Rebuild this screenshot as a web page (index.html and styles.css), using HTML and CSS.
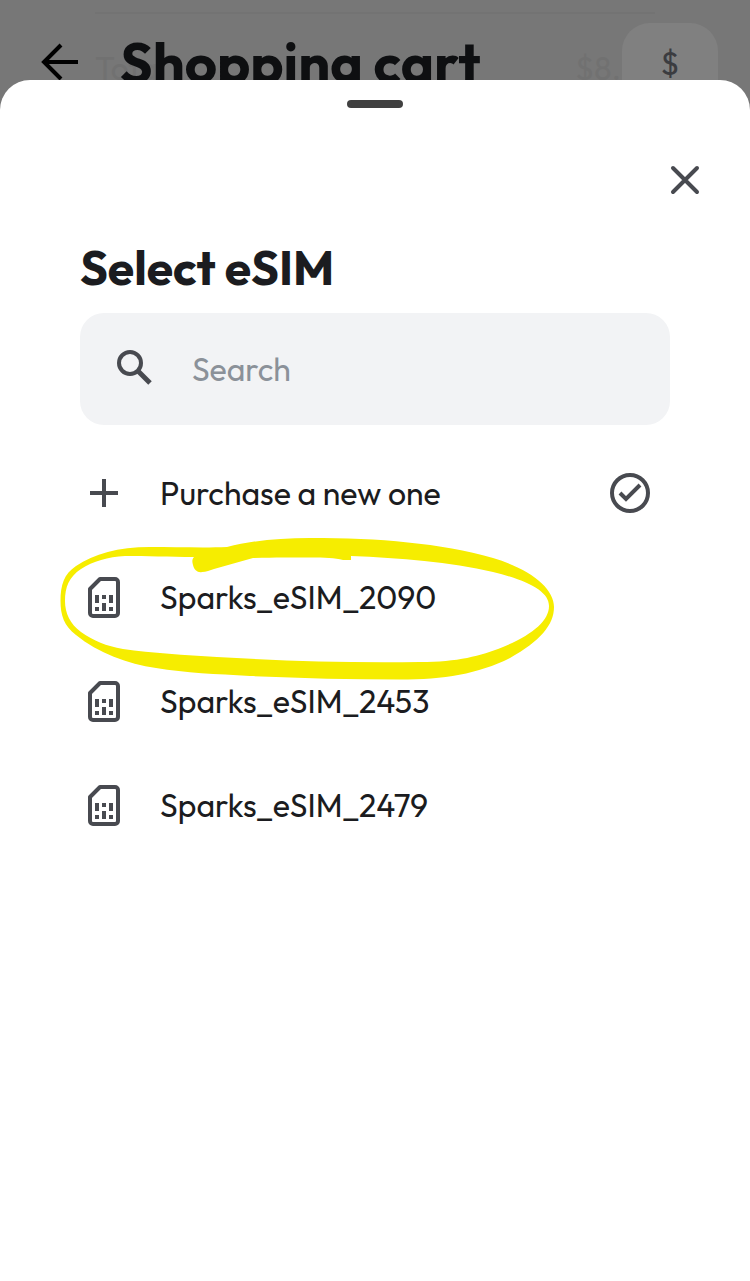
FILE: index.html
```html
<!DOCTYPE html>
<html lang="en">
<head>
<meta charset="utf-8">
<meta name="viewport" content="width=device-width, initial-scale=1">
<title>Select eSIM</title>
<link rel="stylesheet" href="styles.css">
</head>
<body>
<svg class="defs" aria-hidden="true">
  <symbol id="sim" viewBox="0 0 48 48">
    <path d="M20 6H35a3 3 0 0 1 3 3V40a3 3 0 0 1-3 3H13a3 3 0 0 1-3-3V16Z" fill="none" stroke="currentColor" stroke-width="4" stroke-linejoin="round"/>
    <path d="M15 22h4v8h-4zM22 22h4v4h-4zM29 22h4v8h-4zM15 34h4v4h-4zM22 30h4v8h-4zM29 34h4v4h-4z" fill="currentColor"/>
  </symbol>
</svg>
<header class="topbar">
  <div class="total"><span>Total</span><span>$8.</span></div>
  <div class="topbar-row">
    <button class="icon-button back" aria-label="Back">
      <svg class="icon" viewBox="0 0 48 48"><path d="M42 24H8M25 7L8 24L25 41" fill="none" stroke="currentColor" stroke-width="4"/></svg>
    </button>
    <h1 class="page-title">Shopping cart</h1>
    <button class="currency" aria-label="Currency">$</button>
  </div>
</header>
<main class="sheet">
  <div class="handle"></div>
  <div class="close-row">
    <button class="icon-button" aria-label="Close">
      <svg class="icon" viewBox="0 0 48 48"><path d="M12 12L36 36M36 12L12 36" fill="none" stroke="currentColor" stroke-width="4" stroke-linecap="round"/></svg>
    </button>
  </div>
  <section class="content">
    <h2 class="title">Select eSIM</h2>
    <label class="search">
      <svg class="icon" viewBox="0 0 48 48" aria-hidden="true"><circle cx="20" cy="18" r="11" fill="none" stroke="currentColor" stroke-width="4"/><path d="M28 26L40 38" fill="none" stroke="currentColor" stroke-width="5"/></svg>
      <input type="search" placeholder="Search" aria-label="Search">
    </label>
    <ul class="options">
      <li><button class="option">
        <svg class="icon" viewBox="0 0 48 48"><path d="M24 10V38M10 24H38" fill="none" stroke="currentColor" stroke-width="4"/></svg>
        <span class="name">Purchase a new one</span>
        <svg class="check" viewBox="0 0 40 40"><circle cx="20" cy="20" r="18" fill="none" stroke="currentColor" stroke-width="4"/><path d="M10 20L16 26L30 12" fill="none" stroke="currentColor" stroke-width="4"/></svg>
      </button></li>
      <li class="marked"><button class="option">
        <svg class="icon"><use href="#sim"/></svg>
        <span class="name">Sparks_eSIM_2090</span>
      </button>
      <svg class="marker" viewBox="60 530 500 160" aria-hidden="true"><path fill="#f6ed00" fill-rule="evenodd" d="M60.500 601C60.500 585 64 574 76 566C94 554 118 547 150 547C175 547 205 548 227 547C250 541 278 538 310 538C380 538 440 543 493 558C530 569 554 588 554 607C554 625 540 641 510 658C478 674 444 679.500 400 679.500C350 679.500 300 678 250 676C216 674 186 673 156 668C128 664 98 653 76 635C64 626 60.500 615 60.500 601ZM65 601C65 587 69 577 81 569C93 561 108 557 125 556C145 556 170 557 194 557C192 559 192 562 193 565C194 570 198 573 202 572C206 572 210 570 214 569L253 558C275 557.500 292 557.500 310 557.500C325 557.500 335 558 343 560H351V556C400 558 450 562 493 572C530 581 549 592 549 606C549 621 532 635 503 647C480 656 458 662 420 662C350 663 285 661 217 657C185 655 152 653 123 649C106 646 94 641 81 632C70 624 65 613 65 601Z"/></svg></li>
      <li><button class="option">
        <svg class="icon"><use href="#sim"/></svg>
        <span class="name">Sparks_eSIM_2453</span>
      </button></li>
      <li><button class="option">
        <svg class="icon"><use href="#sim"/></svg>
        <span class="name">Sparks_eSIM_2479</span>
      </button></li>
    </ul>
  </section>
</main>
</body>
</html>
```
FILE: styles.css
```css
* { box-sizing: border-box; }
body {
  margin: 0;
  min-height: 100vh;
  display: flex;
  flex-direction: column;
  background: #777;
  color: #1b1c20;
  font-family: Outfit, Lato, "Open Sans", sans-serif;
  font-size: 32px;
  line-height: 40px;
}
button, input { font: inherit; color: inherit; border: 0; background: none; padding: 0; margin: 0; }
h1, h2, ul { margin: 0; padding: 0; }
ul { list-style: none; }
.defs { display: none; }
.icon { width: 48px; height: 48px; flex: none; display: block; }
.icon-button { color: #484a50; }
.topbar { position: relative; height: 80px; }
.total {
  position: absolute;
  inset: 12px 95px auto;
  padding-top: 34px;
  padding-right: 34px;
  display: flex;
  justify-content: space-between;
  border-top: 2px solid #737373;
  color: #717171;
}
.topbar-row {
  position: relative;
  display: flex;
  align-items: flex-start;
  gap: 36px;
  padding: 23px 32px 0 36px;
}
.back { color: #000; margin-top: 15px; }
.page-title {
  flex: 1;
  padding-top: 12px;
  font-size: 56px;
  line-height: 56px;
  font-weight: 700;
  color: #0e0f11;
}
.currency {
  width: 96px;
  height: 96px;
  padding-bottom: 16px;
  border-radius: 28px;
  background: #808080;
  color: #3b3c40;
  font-size: 32px;
}
.sheet {
  position: relative;
  flex: 1;
  padding-top: 20px;
  border-radius: 30px 30px 0 0;
  background: #fff;
}
.handle { width: 56px; height: 8px; margin: 0 auto; border-radius: 4px; background: #404040; }
.close-row { display: flex; justify-content: flex-end; padding: 48px 41px 0; }
.content { padding: 35px 80px 48px; }
.title { font-size: 48px; line-height: 56px; font-weight: 700; }
.search {
  display: flex;
  align-items: center;
  gap: 34px;
  height: 112px;
  margin-top: 18px;
  padding: 0 32px 0 30px;
  border-radius: 24px;
  background: #f2f3f5;
  color: #484a50;
}
.search input { flex: 1; min-width: 0; outline: 0; appearance: none; }
.search input::placeholder { color: #8b9199; opacity: 1; }
.options { margin-top: 16px; }
.option {
  display: flex;
  align-items: center;
  gap: 32px;
  width: 100%;
  height: 104px;
  padding-right: 20px;
  text-align: left;
  color: #484a50;
}
.name { flex: 1; color: #1b1c20; }
.check { width: 40px; height: 40px; }
.marked { position: relative; }
.marker {
  position: absolute;
  top: -15px;
  left: -20px;
  width: 500px;
  height: 160px;
  pointer-events: none;
}
```
